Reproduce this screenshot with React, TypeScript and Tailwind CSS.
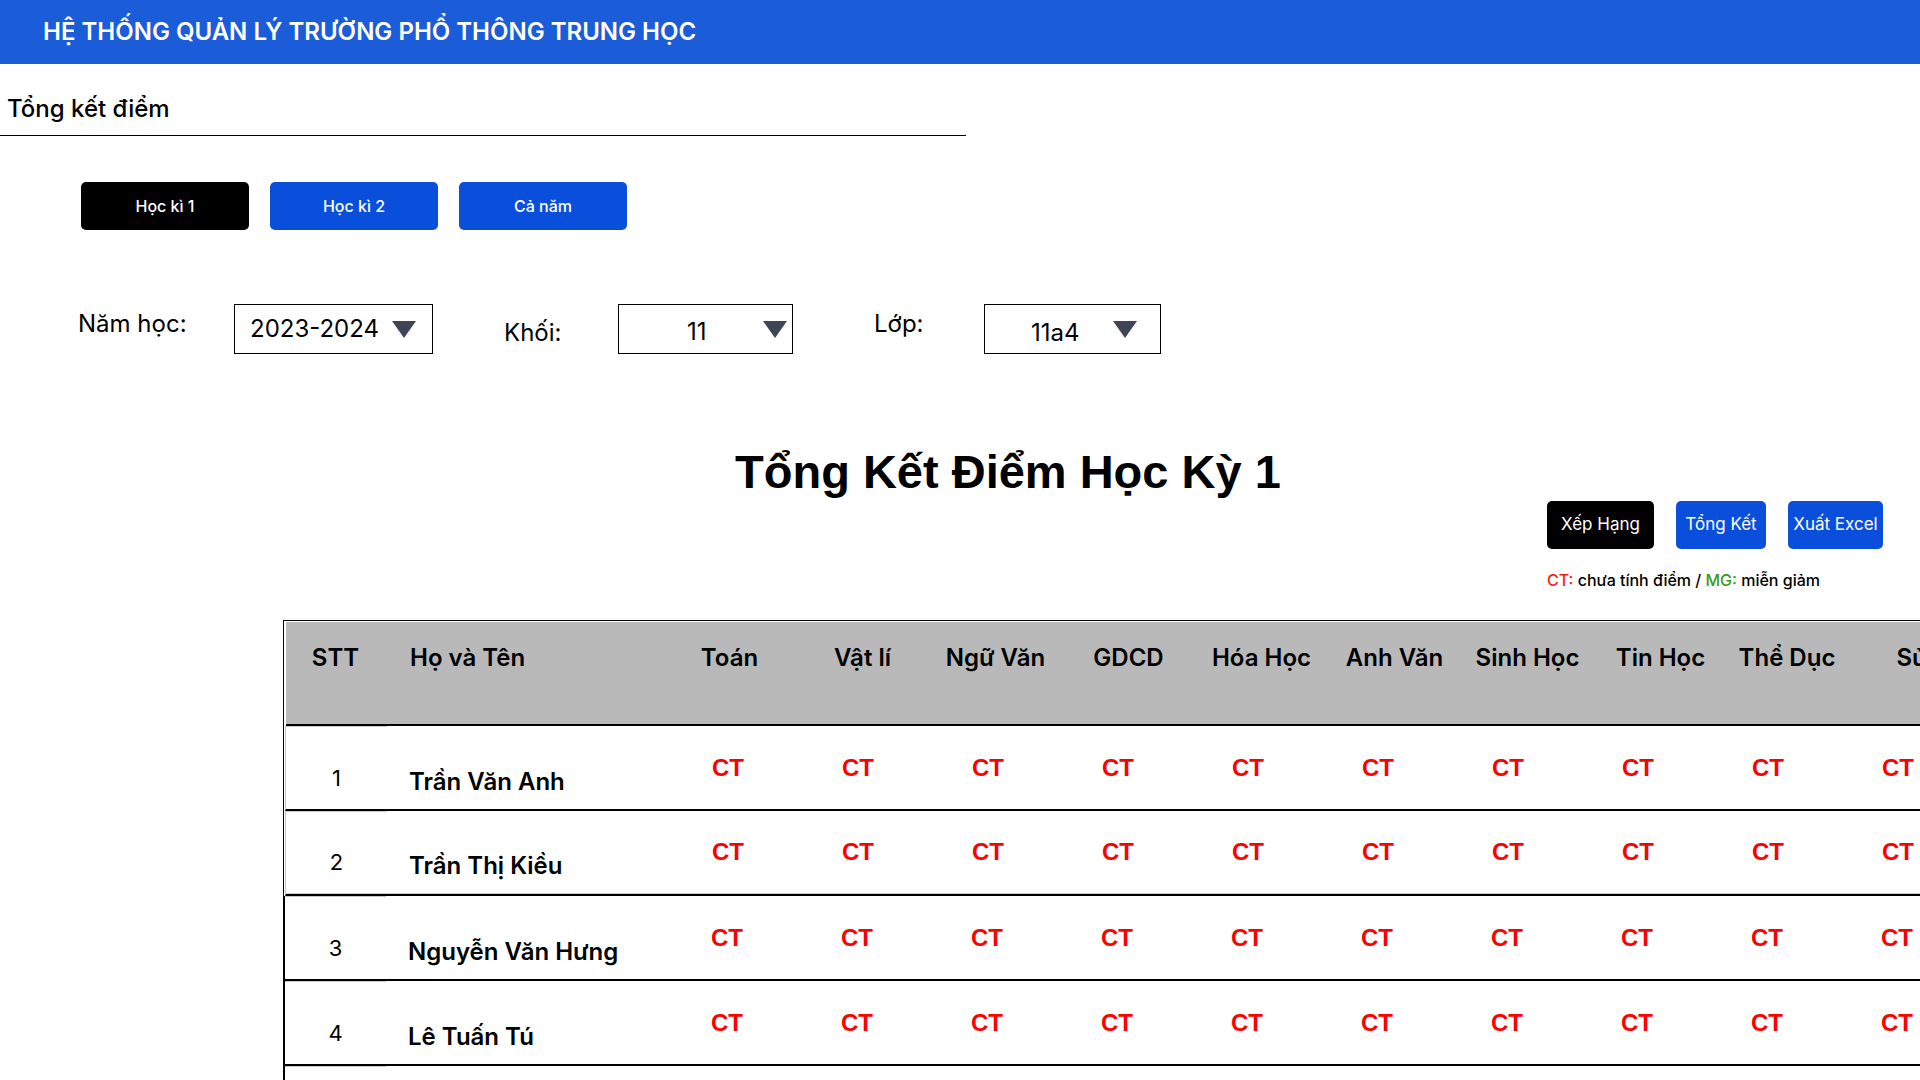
const subjects = [
  "Toán",
  "Vật lí",
  "Ngữ Văn",
  "GDCD",
  "Hóa Học",
  "Anh Văn",
  "Sinh Học",
  "Tin Học",
  "Thể Dục",
  "Sử",
  "Địa Lí",
  "Công Nghệ",
];

// header label columns don't line up exactly with the score cells in the design
const headWidths = ["w-[133px]", "w-[133px]", "w-[133px]", "w-[133px]", "w-[133px]", "w-[133px]", "w-[133px]", "w-[133px]", "w-[120px]", "w-[130px]", "w-[130px]", "w-[130px]"];

const students = [
  { id: 1, name: "Trần Văn Anh" },
  { id: 2, name: "Trần Thị Kiều" },
  { id: 3, name: "Nguyễn Văn Hưng" },
  { id: 4, name: "Lê Tuấn Tú" },
  { id: 5, name: "Phạm Minh Châu" },
];

function Caret() {
  return (
    <svg width="24" height="17" viewBox="0 0 24 17" className="shrink-0">
      <polygon points="0,0 24,0 12,17" fill="#3f4555" />
    </svg>
  );
}

function SelectBox({ value, box, textClass }: { value: string; box: string; textClass: string }) {
  return (
    <div className={`${box} h-[50px] border border-black flex items-center shrink-0`}>
      <span className={`flex-1 text-[24px] leading-none whitespace-nowrap ${textClass}`}>{value}</span>
      <Caret />
    </div>
  );
}

export default function App() {
  return (
    <div className="h-screen w-full overflow-hidden bg-white text-black font-['Inter','Noto_Sans',sans-serif]">
      {/* Top bar */}
      <header className="h-16 bg-[#1b5cd9] flex items-center pl-[43px]">
        <h1 className="text-white text-[24px] font-semibold whitespace-nowrap">
          HỆ THỐNG QUẢN LÝ TRƯỜNG PHỔ THÔNG TRUNG HỌC
        </h1>
      </header>

      {/* Section title */}
      <div className="w-[966px] h-[72px] border-b border-black flex items-end pb-[14px] pl-[7px]">
        <h2 className="text-[24px] font-medium leading-none">Tổng kết điểm</h2>
      </div>

      {/* Term tabs */}
      <div className="flex gap-[21px] pl-[81px] mt-[46px]">
        <button className="w-[168px] h-[48px] rounded-[5px] bg-black text-white text-[16px] font-medium">Học kì 1</button>
        <button className="w-[168px] h-[48px] rounded-[5px] bg-[#0a4fdb] text-white text-[16px] font-medium">Học kì 2</button>
        <button className="w-[168px] h-[48px] rounded-[5px] bg-[#0a4fdb] text-white text-[16px] font-medium">Cả năm</button>
      </div>

      {/* Filters */}
      <div className="flex items-center pl-[78px] mt-[74px] whitespace-nowrap">
        <span className="w-[108px] shrink-0 text-[24px] -translate-y-[5px]">Năm học:</span>
        <div className="ml-[48px]">
          <SelectBox value="2023-2024" box="w-[199px] pr-[16px]" textClass="pl-[15px]" />
        </div>
        <span className="ml-[71px] w-[57px] shrink-0 text-[24px] translate-y-[4px]">Khối:</span>
        <div className="ml-[57px]">
          <SelectBox value="11" box="w-[175px] pr-[5px]" textClass="pl-[68px] translate-y-[3px]" />
        </div>
        <span className="ml-[81px] w-[49px] shrink-0 text-[24px] -translate-y-[5px]">Lớp:</span>
        <div className="ml-[61px]">
          <SelectBox value="11a4" box="w-[177px] pr-[23px]" textClass="pl-[46px] translate-y-[4px]" />
        </div>
      </div>

      {/* Title */}
      <h2 className="mt-[92px] pl-[735px] text-[47px] font-bold leading-[51px] whitespace-nowrap font-['Liberation_Sans',Arial,sans-serif]">
        Tổng Kết Điểm Học Kỳ 1
      </h2>

      {/* Actions + legend */}
      <div className="flex justify-end pr-[37px] mt-[4px]">
        <div className="flex flex-col">
          <div className="flex gap-[22px]">
            <button className="w-[107px] h-[48px] rounded-[5px] bg-black text-white text-[17px]">Xếp Hạng</button>
            <button className="w-[90px] h-[48px] rounded-[5px] bg-[#0a4fdb] text-white text-[17px]">Tổng Kết</button>
            <button className="w-[95px] h-[48px] rounded-[5px] bg-[#0a4fdb] text-white text-[17px]">Xuất Excel</button>
          </div>
          <p className="mt-[21px] text-[16px] leading-5 font-medium whitespace-nowrap">
            <span className="text-[#ff1a1a]">CT:</span> chưa tính điểm / <span className="text-[#3a9a1a]">MG:</span> miễn giảm
          </p>
        </div>
      </div>

      {/* Table */}
      <div className="ml-[283px] mt-[30px] w-[2400px] border-t border-l border-black pt-[1px]">
        <div className="ml-[2px] h-[104px] bg-[#b9b9b9] border-b-2 border-black flex items-start pt-[18px] text-[24px] font-semibold whitespace-nowrap">
          <div className="w-[99px] shrink-0 text-center">STT</div>
          <div className="w-[278px] shrink-0 pl-[25px]">Họ và Tên</div>
          {subjects.map((s, i) => (
            <div key={s} className={`${headWidths[i]} text-center shrink-0`}>
              {s}
            </div>
          ))}
        </div>
        {students.map((st, i) => (
          <div
            key={st.id}
            className={`h-[85px] border-b-2 border-black flex ${i < 2 ? "ml-[1px] border-l border-l-[#c8c8c8]" : "border-l border-l-black"}`}
          >
            <div className={`flex-1 flex ${i === 1 ? "border-b border-[#c8c8c8]" : ""}`}>
              <div className="w-[101px] shrink-0 border-t border-[#c8c8c8] flex items-center justify-center pt-[20px] text-[22px]">
                {st.id}
              </div>
              <div className="w-[276px] shrink-0 flex items-center pl-[22px] pt-[28px] text-[24px] font-semibold whitespace-nowrap">
                {st.name}
              </div>
              {subjects.map((s) => (
                <div
                  key={s}
                  className="w-[130px] shrink-0 flex items-center justify-center text-[24px] font-bold text-[#f00] font-['Liberation_Sans',Arial,sans-serif]"
                >
                  CT
                </div>
              ))}
            </div>
          </div>
        ))}
      </div>
    </div>
  );
}
